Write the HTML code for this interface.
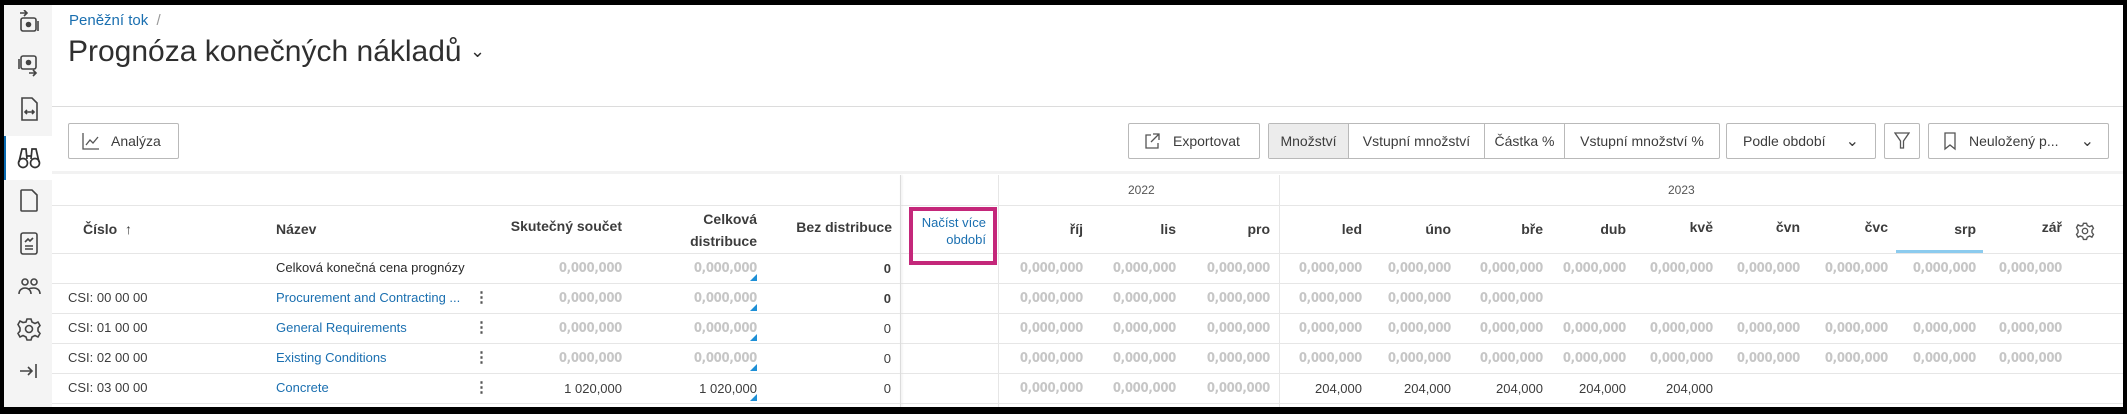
<!DOCTYPE html>
<html><head><meta charset="utf-8">
<style>
*{margin:0;padding:0;box-sizing:border-box}
body{width:2127px;height:414px;background:#000;font-family:"Liberation Sans",sans-serif;color:#3c3c3c;overflow:hidden;position:relative}
#app{position:absolute;left:4px;top:5px;width:2119px;height:402px;background:#fff;overflow:hidden}
.a{position:absolute;white-space:nowrap}
.sb{position:absolute;left:0;top:0;width:48px;height:402px;background:#f4f4f4}
.ic{position:absolute;left:12px;width:26px;height:26px}
.btn{position:absolute;top:118px;height:36px;border:1px solid #b9b9b9;border-radius:2px;background:#fff;font-size:14px;display:flex;align-items:center;color:#3c3c3c}
.hl{position:absolute;height:1px;background:#e6e6e6}
.vl{position:absolute;width:1px;background:#e6e6e6}
.h{font-size:14px;font-weight:bold;color:#3c3c3c;position:absolute;white-space:nowrap}
.r{text-align:right}
.c{font-size:13px;position:absolute;white-space:nowrap}
.ph{font-size:13px;font-weight:bold;color:#c6c6c6;position:absolute;white-space:nowrap;letter-spacing:-0.3px;font-family:"DejaVu Sans Condensed","Liberation Sans",sans-serif}
.lnk{color:#1a6fb0}
.tri{position:absolute;width:0;height:0;border-left:7px solid transparent;border-bottom:7px solid #1d8fd6}
.kb{position:absolute;font-size:15px;color:#555;font-weight:bold}
</style></head><body>
<div id="app">
<div class="sb">
 <div style="position:absolute;left:0;top:131px;width:48px;height:44px;background:#fff;border-left:2px solid #0a6ab0"></div>
 <svg class="ic" style="top:5px" viewBox="0 0 26 26" fill="none" stroke="#444" stroke-width="1.6"><path d="M4 3h7M8 0l3 3-3 3"/><rect x="5" y="8" width="15" height="13" rx="2"/><path d="M22 11v10"/><circle cx="12.5" cy="14.5" r="2" fill="#444"/></svg>
 <svg class="ic" style="top:47px" viewBox="0 0 26 26" fill="none" stroke="#444" stroke-width="1.6"><rect x="5" y="4" width="15" height="13" rx="2"/><path d="M3 7v10"/><circle cx="12.5" cy="10.5" r="2" fill="#444"/><path d="M13 21h7M17 18l3 3-3 3"/></svg>
 <svg class="ic" style="top:91px" viewBox="0 0 26 26" fill="none" stroke="#444" stroke-width="1.6"><path d="M6 2h10l5 5v17H6z"/><path d="M9 16h9M11 14l-2 2 2 2M16 14l2 2-2 2"/></svg>
 <svg class="ic" style="top:139px" viewBox="0 0 26 26" fill="none" stroke="#333" stroke-width="1.7"><circle cx="7" cy="19" r="4.5"/><circle cx="19" cy="19" r="4.5"/><path d="M3 18l3-13h4l1 10M23 18l-3-13h-4l-1 10M11 12h4"/></svg>
 <svg class="ic" style="top:182px" viewBox="0 0 26 26" fill="none" stroke="#444" stroke-width="1.6"><path d="M6 3h10l5 5v15a1 1 0 0 1-1 1H6a1 1 0 0 1-1-1V4a1 1 0 0 1 1-1z"/></svg>
 <svg class="ic" style="top:225px" viewBox="0 0 26 26" fill="none" stroke="#444" stroke-width="1.6"><rect x="5" y="3" width="16" height="21" rx="2"/><path d="M9 12l3-3 2 2 3-3M9 16h8M9 19h8"/></svg>
 <svg class="ic" style="top:269px" viewBox="0 0 26 26" fill="none" stroke="#444" stroke-width="1.6"><circle cx="9" cy="8" r="3"/><circle cx="18" cy="8" r="3"/><path d="M3 20c0-4 3-6 6-6s6 2 6 6M13 15c1-1 3-1 5-1 3 0 6 2 6 6"/></svg>
 <svg class="ic" style="top:311px" viewBox="0 0 26 26" fill="none" stroke="#444" stroke-width="1.6"><circle cx="13" cy="13" r="3.5"/><path d="M11 3h4l1 3 3 1.5 3-1.5 2 3.5-2 2.5v3l2 2.5-2 3.5-3-1.5-3 1.5-1 3h-4l-1-3-3-1.5-3 1.5-2-3.5 2-2.5v-3L2 8.5l2-3.5 3 1.5L10 6z"/></svg>
 <svg class="ic" style="top:353px" viewBox="0 0 26 26" fill="none" stroke="#444" stroke-width="1.6"><path d="M4 13h12M12 9l4 4-4 4M20 6v14"/></svg>
</div>
<div class="a lnk" style="left:65px;top:7px;font-size:15px">Peněžní tok <span style="color:#999">&nbsp;/</span></div>
<div class="a" style="left:64px;top:30px;font-size:30px;color:#2f2f2f">Prognóza konečných nákladů <span style="font-size:18px;vertical-align:4px">&#8964;</span></div>
<div class="hl" style="left:48px;top:101px;width:2071px;background:#dcdcdc"></div>

<div class="btn" style="left:64px;width:111px;padding-left:12px"><svg width="20" height="20" viewBox="0 0 20 20" fill="none" stroke="#555" stroke-width="1.3"><path d="M2 2v16h16M5 14l4-5 3 3 5-6"/></svg><span style="margin-left:10px">Analýza</span></div>
<div class="btn" style="left:1124px;width:132px;padding-left:14px"><svg width="18" height="18" viewBox="0 0 18 18" fill="none" stroke="#555" stroke-width="1.3"><path d="M8 3H3v13h12v-5M10 2h6v6M16 2L8 10"/></svg><span style="margin-left:12px">Exportovat</span></div>
<div class="btn" style="left:1264px;width:452px;padding:0">
 <div style="width:80px;height:100%;background:#ececec;border-right:1px solid #b9b9b9;display:flex;align-items:center;justify-content:center">Množství</div>
 <div style="width:136px;height:100%;border-right:1px solid #b9b9b9;display:flex;align-items:center;justify-content:center">Vstupní množství</div>
 <div style="width:80px;height:100%;border-right:1px solid #b9b9b9;display:flex;align-items:center;justify-content:center">Částka %</div>
 <div style="flex:1;height:100%;display:flex;align-items:center;justify-content:center">Vstupní množství %</div>
</div>
<div class="btn" style="left:1722px;width:150px;padding-left:16px">Podle období<span style="position:absolute;right:16px;top:7px;font-size:16px">&#8964;</span></div>
<div class="btn" style="left:1880px;width:36px;justify-content:center"><svg width="16" height="20" viewBox="0 0 16 20" fill="none" stroke="#555" stroke-width="1.3"><path d="M1 2h14l-5.5 8v7h-3v-7z"/></svg></div>
<div class="btn" style="left:1924px;width:181px;padding-left:14px"><svg width="14" height="20" viewBox="0 0 14 20" fill="none" stroke="#555" stroke-width="1.3"><path d="M2 2h10v16l-5-4-5 4z"/></svg><span style="margin-left:12px">Neuložený p...</span><span style="position:absolute;right:14px;top:7px;font-size:16px">&#8964;</span></div>

<div class="hl" style="left:48px;top:166px;width:2071px;height:3px;background:#f2f2f2"></div>
<div class="hl" style="left:48px;top:200px;width:2071px"></div>
<div class="hl" style="left:48px;top:248px;width:2071px"></div>
<div class="hl" style="left:48px;top:278px;width:2071px"></div>
<div class="hl" style="left:48px;top:308px;width:2071px"></div>
<div class="hl" style="left:48px;top:338px;width:2071px"></div>
<div class="hl" style="left:48px;top:368px;width:2071px"></div>
<div class="hl" style="left:48px;top:398px;width:2071px"></div>
<div class="vl" style="left:896px;top:170px;height:232px;background:#dcdcdc;box-shadow:1px 0 2px #e0e0e0"></div>
<div class="vl" style="left:994px;top:170px;height:232px"></div>
<div class="vl" style="left:1275px;top:170px;height:232px"></div>

<div class="a" style="left:1124px;top:178px;font-size:12px;color:#555">2022</div>
<div class="a" style="left:1664px;top:178px;font-size:12px;color:#555">2023</div>

<div class="h" style="left:79px;top:216px">Číslo &nbsp;&#8593;</div>
<div class="h" style="left:272px;top:216px">Název</div>
<div class="h r" style="right:1501px;top:213px">Skutečný součet</div>
<div class="h r" style="right:1366px;top:203px;line-height:22px">Celková<br>distribuce</div>
<div class="h r" style="right:1231px;top:214px">Bez distribuce</div>
<div style="position:absolute;left:905px;top:202px;width:88px;height:58px;border:4px solid #c4277a"></div>
<div class="c lnk r" style="right:1137px;top:209px;line-height:17px;font-size:13px">Načíst více<br>období</div>

<div class="h r" style="right:1040px;top:216px">říj</div>
<div class="h r" style="right:947px;top:216px">lis</div>
<div class="h r" style="right:853px;top:216px">pro</div>
<div class="h r" style="right:761px;top:216px">led</div>
<div class="h r" style="right:672px;top:216px">úno</div>
<div class="h r" style="right:580px;top:216px">bře</div>
<div class="h r" style="right:497px;top:216px">dub</div>
<div class="h r" style="right:410px;top:214px">kvě</div>
<div class="h r" style="right:323px;top:214px">čvn</div>
<div class="h r" style="right:235px;top:214px">čvc</div>
<div class="h r" style="right:147px;top:216px">srp</div>
<div class="h r" style="right:61px;top:214px">zář</div>
<div style="position:absolute;left:1892px;top:245px;width:87px;height:3px;background:#8ccbee"></div>
<svg style="position:absolute;left:2071px;top:216px" width="20" height="20" viewBox="0 0 26 26" fill="none" stroke="#555" stroke-width="1.8"><circle cx="13" cy="13" r="3.5"/><path d="M11 3h4l1 3 3 1.5 3-1.5 2 3.5-2 2.5v3l2 2.5-2 3.5-3-1.5-3 1.5-1 3h-4l-1-3-3-1.5-3 1.5-2-3.5 2-2.5v-3L2 8.5l2-3.5 3 1.5L10 6z"/></svg>

<div class="c" style="left:272px;top:255px;color:#2a2a2a">Celková konečná cena prognózy</div>
<div class="c" style="left:64px;top:285px">CSI: 00 00 00</div><div class="c lnk" style="left:272px;top:285px">Procurement and Contracting ...</div><div class="kb" style="left:470px;top:283px">&#8942;</div>
<div class="c" style="left:64px;top:315px">CSI: 01 00 00</div><div class="c lnk" style="left:272px;top:315px">General Requirements</div><div class="kb" style="left:470px;top:313px">&#8942;</div>
<div class="c" style="left:64px;top:345px">CSI: 02 00 00</div><div class="c lnk" style="left:272px;top:345px">Existing Conditions</div><div class="kb" style="left:470px;top:343px">&#8942;</div>
<div class="c" style="left:64px;top:375px">CSI: 03 00 00</div><div class="c lnk" style="left:272px;top:375px">Concrete</div><div class="kb" style="left:470px;top:373px">&#8942;</div>

<div id="vals"></div>
<script>
(function(){
 var o='';
 var ys=[256,286,316,346,376];
 function ph(r,y){return '<div class="ph r" style="right:'+r+'px;top:'+y+'px">0,000,000</div>';}
 function tx(r,y,t,b){return '<div class="c r" style="right:'+r+'px;top:'+y+'px;'+(b?'font-weight:bold;':'')+'">'+t+'</div>';}
 for(var i=0;i<5;i++){
  var y=ys[i];
  o+= i<4?ph(1501,y):tx(1501,y,'1 020,000');
  o+= i<4?ph(1366,y):tx(1366,y,'1 020,000');
  o+='<div class="tri" style="left:746px;top:'+(y+13)+'px"></div>';
  o+=tx(1232,y,'0',i<2);
  [1040,947,853].forEach(function(r){o+=ph(r,y);});
  var rest=[761,672,580,497,410,323,235,147,61];
  rest.forEach(function(r,j){
   if(i==1&&j>2)return;
   if(i==4){ if(j<5)o+=tx(r,y,'204,000'); return;}
   o+=ph(r,y);
  });
 }
 document.getElementById('vals').innerHTML=o;
})();
</script>
</div>
</body></html>
